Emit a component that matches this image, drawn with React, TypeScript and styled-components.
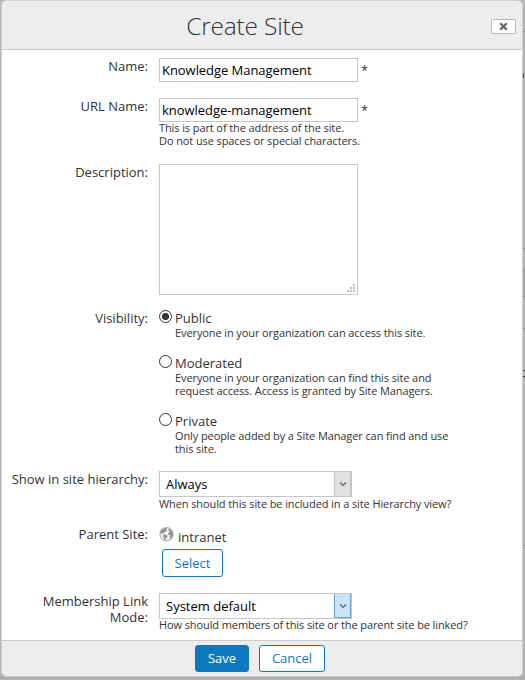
import React, { useState } from "react";
import styled, { createGlobalStyle, css } from "styled-components";

const GlobalStyle = createGlobalStyle`
  *, *::before, *::after { box-sizing: border-box; }
  body {
    margin: 0;
    font-family: "Open Sans", "Noto Sans", sans-serif;
    font-size: 13px;
    line-height: 16px;
    color: #333;
    background: #b7b7b7;
  }
`;

const Page = styled.main`
  width: 525px;
  height: 680px;
  padding: 0 2px 3px 1px;
  overflow: hidden;
  background:
    linear-gradient(#8f8f8f, #8f8f8f) 523px 31px / 2px 1px no-repeat,
    linear-gradient(#24486b, #24486b) 523px 73px / 1px 5px no-repeat,
    linear-gradient(#8f8f8f, #8f8f8f) 523px 248px / 2px 1px no-repeat,
    linear-gradient(#8f8f8f, #8f8f8f) 523px 269px / 2px 1px no-repeat,
    linear-gradient(#8f8f8f, #8f8f8f) 523px 296px / 2px 1px no-repeat,
    linear-gradient(#a9a9a9, #a9a9a9) 523px 270px / 2px 26px no-repeat,
    linear-gradient(#8f8f8f, #8f8f8f) 523px 328px / 2px 1px no-repeat,
    linear-gradient(#24365b, #24365b) 523px 370px / 2px 1px no-repeat,
    linear-gradient(#24365b, #24365b) 523px 376px / 2px 1px no-repeat,
    linear-gradient(#8f8f8f, #8f8f8f) 523px 545px / 2px 1px no-repeat,
    linear-gradient(#b7b7b7 675px, #a9a9a9 677px, #b5b5b5);
`;

const Dialog = styled.section`
  display: flex;
  flex-direction: column;
  height: 677px;
  border: 1px solid #ccc;
  border-top-color: #d6d6d6;
  border-radius: 6px;
  background: #fff;
  overflow: hidden;
`;

const Header = styled.header`
  display: grid;
  grid-template-columns: 37px 1fr 37px;
  align-items: center;
  flex: 0 0 49px;
  border-bottom: 1px solid #ccc;
  background: #ededed;
`;

const Title = styled.h1`
  grid-column: 2;
  margin: 2px 0 0 0;
  padding-right: 34px;
  text-align: center;
  font-size: 24.5px;
  font-weight: 300;
  letter-spacing: -0.2px;
  line-height: 34px;
`;

const CloseButton = styled.button`
  display: flex;
  align-items: center;
  justify-content: center;
  width: 25px;
  height: 15px;
  margin: 3px 0 0 6px;
  padding: 0;
  border: 1px solid #bbb;
  border-radius: 1px;
  background: #fff;
`;

const Form = styled.form`
  flex: 1;
  padding-top: 8px;
`;

const Row = styled.div<{ $height: number }>`
  display: grid;
  grid-template-columns: 146px 1fr;
  column-gap: 11px;
  height: ${(p) => p.$height}px;
`;

const Label = styled.div`
  text-align: right;
`;

const Line = styled.div`
  display: flex;
`;

const Required = styled.span`
  margin: 4px 0 0 3px;
`;

const TextInput = styled.input`
  width: 199px;
  height: 24px;
  padding: 0 2px 1px;
  border: 1px solid #c6c6c6;
  border-radius: 0;
  outline: none;
  background: #fff;
  color: #000;
  font: inherit;
  letter-spacing: -0.05px;
`;

const Description = styled.div`
  display: flex;
  align-items: flex-end;
  width: 199px;
  height: 131px;
  border: 1px solid #c6c6c6;
`;

const DescriptionInput = styled.textarea`
  flex: 1;
  height: 100%;
  min-width: 0;
  padding: 2px;
  border: 0;
  outline: none;
  resize: none;
  font: inherit;
`;

const Grip = styled.svg`
  margin: 0 2px 2px 0;
`;

const Help = styled.div<{ $tight?: boolean }>`
  margin-top: ${(p) => (p.$tight ? -1 : 0)}px;
  font-size: 11px;
  line-height: 13px;
  letter-spacing: -0.1px;
  font-variant-ligatures: common-ligatures;
  white-space: pre-line;
`;

const Option = styled.div<{ $gap: number }>`
  display: grid;
  grid-template-columns: 13px 1fr;
  column-gap: 3px;
  margin-bottom: ${(p) => p.$gap}px;
`;

const Radio = styled.button<{ $checked: boolean }>`
  width: 13px;
  height: 13px;
  padding: 0;
  border: 1px solid #333;
  border-radius: 50%;
  background: ${(p) =>
    p.$checked ? "radial-gradient(circle, #333 3.2px, #fff 4px)" : "#fff"};
`;

const Select = styled.div`
  display: flex;
  width: 193px;
  height: 26px;
  border: 1px solid #c6c6c6;
  color: #000;
`;

const SelectValue = styled.span`
  flex: 1;
  padding: 4px 0 0 6px;
`;

const SelectArrow = styled.span<{ $active?: boolean }>`
  display: flex;
  align-items: center;
  justify-content: center;
  width: 17px;
  border: 1px solid #c6c6c6;
  border-width: 0 1px 0 1px;
  background: #e1e1e1;
  ${(p) =>
    p.$active &&
    css`
      border-width: 0 1px 1px;
      border-color: #6ba3d0;
      background: #cce4f7;
    `}
`;

const Parent = styled.div`
  display: flex;
  height: 23px;
  padding-top: 1px;
`;

const ParentName = styled.span`
  margin: 2px 0 0 4px;
`;

const Button = styled.button<{ $width: number; $primary?: boolean }>`
  width: ${(p) => p.$width}px;
  height: 27px;
  padding: 0 0 1px;
  border: 1px solid #0e78be;
  border-radius: 3px;
  background: ${(p) => (p.$primary ? "#0e78be" : "#fff")};
  color: ${(p) => (p.$primary ? "#fff" : "#0e78be")};
  font: inherit;
`;

const SelectButton = styled(Button)`
  height: 28px;
  margin-left: 3px;
  padding: 0;
`;

const Footer = styled.footer`
  display: flex;
  flex: 0 0 36px;
  justify-content: center;
  gap: 10px;
  padding: 4px 4px 0 0;
  border-top: 1px solid #ccc;
  background: #ededed;
`;

const Chevron = () => (
  <svg width="8" height="6" viewBox="0 0 8 6" fill="none">
    <path d="M1 1.5 4 4.5 7 1.5" stroke="#606060" strokeWidth="1.2" />
  </svg>
);

const Globe = () => (
  <svg width="15" height="15" viewBox="0 0 15 15">
    <circle cx="7.5" cy="7.2" r="6.7" fill="#f4f4f4" stroke="#a8a8a8" strokeWidth="1" />
    <path
      d="M1.2 4.4 3.4 1.9 6.6.8 8.6 1.2 7 2.5 8.3 3.3 6.5 5 5.2 5.2 4.9 6.3 3.4 6 2.6 7 1.2 6.2Z"
      fill="#999"
    />
    <path d="M4 7.7 6 7.2 8.6 8.8 8.2 10.4 6.9 11.5 6.2 13.4 5 12.8 4.8 10.4 3.7 9.2Z" fill="#999" />
    <path
      d="M9.6 1.4 12 2.5 13.8 5 14.2 8 12.9 11 11.5 12.3 10.8 10.2 11 8.7 9.3 7.8 9 6 10.5 4.7 9.4 3.4Z"
      fill="#9b9b9b"
    />
  </svg>
);

const gripDots = [[6, 0], [3, 3], [6, 3], [0, 6], [3, 6], [6, 6]];

const visibilities = [
  { name: "Public", help: "Everyone in your organization can access this site.", gap: 16 },
  {
    name: "Moderated",
    help: "Everyone in your organization can find this site and\nrequest access. Access is granted by Site Managers.",
    gap: 16,
  },
  {
    name: "Private",
    help: "Only people added by a Site Manager can find and use\nthis site.",
    gap: 0,
  },
];

export default function App() {
  const [visibility, setVisibility] = useState("Public");
  return (
    <>
      <GlobalStyle />
      <Page>
        <Dialog role="dialog" aria-label="Create Site">
          <Header>
            <Title>Create Site</Title>
            <CloseButton aria-label="Close">
              <svg width="9" height="9" viewBox="0 0 9 9">
                <path d="M1.2 1.2 7.8 7.8M7.8 1.2 1.2 7.8" stroke="#666" strokeWidth="2.3" />
              </svg>
            </CloseButton>
          </Header>
          <Form onSubmit={(e) => e.preventDefault()}>
            <Row $height={40}>
              <Label>Name:</Label>
              <Line>
                <TextInput defaultValue="Knowledge Management" />
                <Required>*</Required>
              </Line>
            </Row>
            <Row $height={66}>
              <Label>URL Name:</Label>
              <div>
                <Line>
                  <TextInput defaultValue="knowledge-management" />
                  <Required>*</Required>
                </Line>
                <Help $tight>{"This is part of the address of the site.\nDo not use spaces or special characters."}</Help>
              </div>
            </Row>
            <Row $height={146}>
              <Label>Description:</Label>
              <Description>
                <DescriptionInput />
                <Grip width="8" height="8" viewBox="0 0 8 8">
                  {gripDots.map(([x, y]) => (
                    <rect key={`${x}-${y}`} x={x} y={y} width="2" height="2" fill="#bdbdbd" />
                  ))}
                </Grip>
              </Description>
            </Row>
            <Row $height={161}>
              <Label>Visibility:</Label>
              <div>
                {visibilities.map((v) => (
                  <Option key={v.name} $gap={v.gap}>
                    <Radio
                      type="button"
                      role="radio"
                      aria-label={v.name}
                      aria-checked={v.name === visibility}
                      $checked={v.name === visibility}
                      onClick={() => setVisibility(v.name)}
                    />
                    <div>
                      {v.name}
                      <Help>{v.help}</Help>
                    </div>
                  </Option>
                ))}
              </div>
            </Row>
            <Row $height={55}>
              <Label>Show in site hierarchy:</Label>
              <div>
                <Select>
                  <SelectValue>Always</SelectValue>
                  <SelectArrow>
                    <Chevron />
                  </SelectArrow>
                </Select>
                <Help>When should this site be included in a site Hierarchy view?</Help>
              </div>
            </Row>
            <Row $height={67}>
              <Label>Parent Site:</Label>
              <div>
                <Parent>
                  <Globe />
                  <ParentName>intranet</ParentName>
                </Parent>
                <SelectButton type="button" $width={61}>
                  Select
                </SelectButton>
              </div>
            </Row>
            <Row $height={47}>
              <Label>
                Membership Link
                <br />
                Mode:
              </Label>
              <div>
                <Select>
                  <SelectValue>System default</SelectValue>
                  <SelectArrow $active>
                    <Chevron />
                  </SelectArrow>
                </Select>
                <Help $tight>How should members of this site or the parent site be linked?</Help>
              </div>
            </Row>
          </Form>
          <Footer>
            <Button $width={54} $primary>
              Save
            </Button>
            <Button $width={66}>Cancel</Button>
          </Footer>
        </Dialog>
      </Page>
    </>
  );
}
